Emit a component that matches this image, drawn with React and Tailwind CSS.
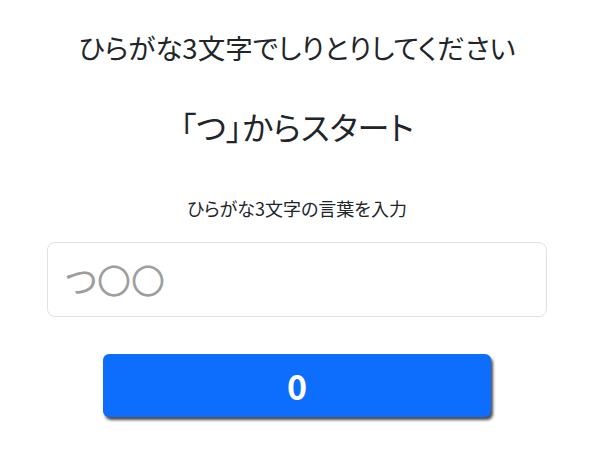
export default function App() {
    return (
        <div className="w-[594px] h-[450px] bg-white flex flex-col items-center text-[#212529] font-['Noto_Sans_CJK_JP',sans-serif] [font-feature-settings:'palt']">
            <h1 className="mt-[27px] text-[27.5px] leading-[40px]">ひらがな3文字でしりとりしてください</h1>
            <h2 className="mt-[36px] text-[32px] leading-[46px]">「つ」からスタート</h2>
            <p className="mt-[47px] text-[18px] leading-[24px]">ひらがな3文字の言葉を入力</p>
            <input
                type="text"
                placeholder="つ〇〇"
                className="mt-[22px] w-[500px] h-[75px] px-[17px] text-[34px] border border-[#dee2e6] rounded-[8px] placeholder:text-[#9e9e9e] outline-none [font-feature-settings:'palt']"
            />
            <button className="mt-[37px] w-[388px] h-[63px] bg-[#0d6efd] text-white text-[34px] font-bold rounded-[6px] shadow-[2px_3px_3px_rgba(0,0,0,0.7)]">
                0
            </button>
        </div>
    );
}
